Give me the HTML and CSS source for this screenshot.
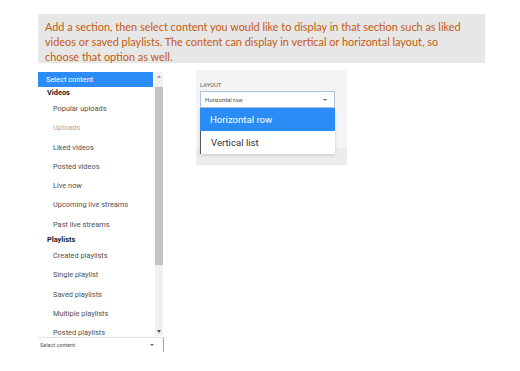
FILE: index.html
```html
<!DOCTYPE html>
<html lang="en">
<head>
    <meta charset="UTF-8">
    <meta name="viewport" content="width=device-width, initial-scale=1.0">
    <title>Sections</title>
    <link rel="stylesheet" href="styles.css">
</head>
<body>
    <div class="note">
        Add a section, then select content you would like to display in that section such as liked<br>
        videos or saved playlists. The content can display in vertical or horizontal layout, so<br>
        choose that option as well.
    </div>

    <div class="workspace">
        <div class="content-picker">
            <div class="listbox">
                <ul class="options">
                    <li class="option selected">Select content</li>
                    <li class="group">Videos</li>
                    <li class="option">Popular uploads</li>
                    <li class="option disabled">Uploads</li>
                    <li class="option">Liked videos</li>
                    <li class="option">Posted videos</li>
                    <li class="option">Live now</li>
                    <li class="option">Upcoming live streams</li>
                    <li class="option">Past live streams</li>
                    <li class="group">Playlists</li>
                    <li class="option">Created playlists</li>
                    <li class="option">Single playlist</li>
                    <li class="option">Saved playlists</li>
                    <li class="option">Multiple playlists</li>
                    <li class="option">Posted playlists</li>
                </ul>
                <div class="scrollbar">
                    <span class="arrow up"></span>
                    <div class="track"><div class="thumb"></div></div>
                    <span class="arrow down"></span>
                </div>
            </div>
            <div class="picker-select">
                <span>Select content</span>
                <span class="caret"></span>
            </div>
        </div>

        <div class="layout-panel">
            <div class="panel-body">
                <label class="field-label">LAYOUT</label>
                <div class="select-wrap">
                    <div class="layout-select">
                        <span>Horizontal row</span>
                        <span class="caret"></span>
                    </div>
                    <ul class="menu">
                        <li class="menu-item active">Horizontal row</li>
                        <li class="menu-item">Vertical list</li>
                    </ul>
                </div>
            </div>
            <div class="panel-foot"></div>
        </div>
    </div>
</body>
</html>
```

FILE: styles.css
```css
body {
    margin: 0;
    padding: 14px 0 0 38px;
    background: #fff;
    font-family: Roboto, Arial, sans-serif;
}

ul {
    list-style: none;
    margin: 0;
    padding: 0;
}

.note {
    width: 447px;
    height: 49px;
    box-sizing: border-box;
    padding: 5px 0 0 7px;
    background-color: #e7e7e7;
    color: #c55a11;
    font-family: Lato, "Open Sans", sans-serif;
    font-size: 10.9px;
    line-height: 15px;
    white-space: nowrap;
}

.workspace {
    display: flex;
    align-items: flex-start;
    margin-top: 7px;
}

/* left column: open content listbox */
.content-picker {
    width: 126px;
    margin-top: 2px;
}

.listbox {
    display: flex;
    height: 264px;
    overflow: hidden;
}

.options {
    width: 115px;
    font-size: 7.4px;
    color: #505050;
}

.option {
    height: 19.3px;
    line-height: 19.3px;
    padding-left: 15px;
    white-space: nowrap;
}

.option.selected {
    height: 15px;
    line-height: 15px;
    padding-left: 8px;
    background-color: #2b8cf6;
    color: #fff;
}

.option.disabled {
    color: #a5a5a5;
}

.group {
    height: 12px;
    line-height: 12px;
    padding-left: 9px;
    font-weight: bold;
    color: #222;
}

.scrollbar {
    width: 8px;
    margin-left: 2px;
    background-color: #f1f1f1;
    display: flex;
    flex-direction: column;
    align-items: center;
}

.scrollbar .track {
    flex: 1;
    width: 100%;
    padding-top: 6px;
}

.scrollbar .thumb {
    height: 178px;
    background-color: #c3c3c3;
}

.arrow {
    width: 0;
    height: 0;
    margin: 3px 0;
    border-left: 2.5px solid transparent;
    border-right: 2.5px solid transparent;
}

.arrow.up {
    border-bottom: 3px solid #a0a0a0;
}

.arrow.down {
    border-top: 3px solid #505050;
}

.picker-select {
    display: flex;
    align-items: center;
    justify-content: space-between;
    height: 14px;
    margin-top: 1px;
    padding: 0 5px 0 2px;
    border-top: 1px solid #d8e4f0;
    border-right: 1px solid #7ea9d8;
    font-size: 5.5px;
    color: #555;
}

.picker-select .caret {
    margin-right: 4px;
}

.caret {
    width: 0;
    height: 0;
    border-left: 2.5px solid transparent;
    border-right: 2.5px solid transparent;
    border-top: 2.5px solid #666;
}

/* right column: layout settings */
.layout-panel {
    width: 151px;
    margin-left: 32px;
    background-color: #f5f5f5;
}

.panel-body {
    height: 78px;
    padding: 12px 0 0 4px;
    box-sizing: border-box;
}

.panel-foot {
    height: 17px;
    background-color: #ececec;
}

.field-label {
    display: block;
    font-size: 5.8px;
    color: #555;
    margin-bottom: 3px;
}

.select-wrap {
    position: relative;
    width: 135px;
}

.layout-select {
    display: flex;
    align-items: center;
    justify-content: space-between;
    height: 17px;
    box-sizing: border-box;
    padding: 0 7px 0 4px;
    background-color: #fff;
    border: 1px solid #a9c3df;
    font-size: 5.8px;
    color: #444;
}

.menu {
    position: absolute;
    top: 17px;
    left: 0;
    width: 100%;
    background-color: #fff;
    border-left: 1px solid #555;
    box-sizing: border-box;
    box-shadow: 0 1px 3px rgba(0, 0, 0, 0.15);
}

.menu-item {
    height: 23px;
    line-height: 23px;
    padding-left: 10px;
    font-size: 9.6px;
    color: #333;
}

.menu-item.active {
    margin-left: -1px;
    background-color: #2b8cf6;
    color: #fff;
}
```
